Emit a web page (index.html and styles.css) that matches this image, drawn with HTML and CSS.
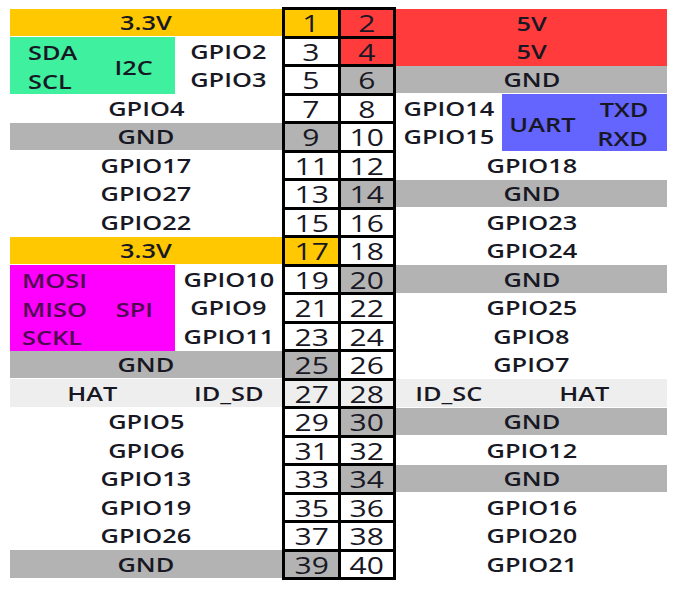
FILE: index.html
```html
<!DOCTYPE html>
<html>
<head>
<meta charset="utf-8">
<link rel="stylesheet" href="styles.css">
</head>
<body>
<div class="board">
  <div class="side left">
    <div class="cell full yellow"><span class="t">3.3V</span></div>
    <div class="group green span2">
      <div class="names"><span class="t l">SDA</span><span class="t l">SCL</span></div>
      <div class="proto"><span class="t">I2C</span></div>
    </div>
    <div class="cell"><span class="t">GPIO2</span></div>
    <div class="cell"><span class="t">GPIO3</span></div>
    <div class="cell full"><span class="t">GPIO4</span></div>
    <div class="cell full grey"><span class="t">GND</span></div>
    <div class="cell full"><span class="t">GPIO17</span></div>
    <div class="cell full"><span class="t">GPIO27</span></div>
    <div class="cell full"><span class="t">GPIO22</span></div>
    <div class="cell full yellow"><span class="t">3.3V</span></div>
    <div class="group magenta span3">
      <div class="names spi"><span class="t l">MOSI</span><span class="t l">MISO</span><span class="t l">SCKL</span></div>
      <div class="proto"><span class="t">SPI</span></div>
    </div>
    <div class="cell"><span class="t">GPIO10</span></div>
    <div class="cell"><span class="t">GPIO9</span></div>
    <div class="cell"><span class="t">GPIO11</span></div>
    <div class="cell full grey"><span class="t">GND</span></div>
    <div class="cell light"><span class="t">HAT</span></div>
    <div class="cell light"><span class="t">ID_SD</span></div>
    <div class="cell full"><span class="t">GPIO5</span></div>
    <div class="cell full"><span class="t">GPIO6</span></div>
    <div class="cell full"><span class="t">GPIO13</span></div>
    <div class="cell full"><span class="t">GPIO19</span></div>
    <div class="cell full"><span class="t">GPIO26</span></div>
    <div class="cell full grey"><span class="t">GND</span></div>
  </div>

  <div class="pins">
    <div class="pin yellow"><span class="n">1</span></div><div class="pin red"><span class="n">2</span></div>
    <div class="pin"><span class="n">3</span></div><div class="pin red"><span class="n">4</span></div>
    <div class="pin"><span class="n">5</span></div><div class="pin grey"><span class="n">6</span></div>
    <div class="pin"><span class="n">7</span></div><div class="pin"><span class="n">8</span></div>
    <div class="pin grey"><span class="n">9</span></div><div class="pin"><span class="n">10</span></div>
    <div class="pin"><span class="n">11</span></div><div class="pin"><span class="n">12</span></div>
    <div class="pin"><span class="n">13</span></div><div class="pin grey"><span class="n">14</span></div>
    <div class="pin"><span class="n">15</span></div><div class="pin"><span class="n">16</span></div>
    <div class="pin yellow"><span class="n">17</span></div><div class="pin"><span class="n">18</span></div>
    <div class="pin"><span class="n">19</span></div><div class="pin grey"><span class="n">20</span></div>
    <div class="pin"><span class="n">21</span></div><div class="pin"><span class="n">22</span></div>
    <div class="pin"><span class="n">23</span></div><div class="pin"><span class="n">24</span></div>
    <div class="pin grey"><span class="n">25</span></div><div class="pin"><span class="n">26</span></div>
    <div class="pin light"><span class="n">27</span></div><div class="pin light"><span class="n">28</span></div>
    <div class="pin"><span class="n">29</span></div><div class="pin grey"><span class="n">30</span></div>
    <div class="pin"><span class="n">31</span></div><div class="pin"><span class="n">32</span></div>
    <div class="pin"><span class="n">33</span></div><div class="pin grey"><span class="n">34</span></div>
    <div class="pin"><span class="n">35</span></div><div class="pin"><span class="n">36</span></div>
    <div class="pin"><span class="n">37</span></div><div class="pin"><span class="n">38</span></div>
    <div class="pin grey"><span class="n">39</span></div><div class="pin"><span class="n">40</span></div>
  </div>

  <div class="side right">
    <div class="group red span2 full stack">
      <span class="t">5V</span><span class="t">5V</span>
    </div>
    <div class="cell full grey"><span class="t">GND</span></div>
    <div class="cell"><span class="t">GPIO14</span></div>
    <div class="group blue span2 uart">
      <div class="proto"><span class="t">UART</span></div>
      <div class="names rx"><span class="t r">TXD</span><span class="t r">RXD</span></div>
    </div>
    <div class="cell"><span class="t">GPIO15</span></div>
    <div class="cell full"><span class="t">GPIO18</span></div>
    <div class="cell full grey"><span class="t">GND</span></div>
    <div class="cell full"><span class="t">GPIO23</span></div>
    <div class="cell full"><span class="t">GPIO24</span></div>
    <div class="cell full grey"><span class="t">GND</span></div>
    <div class="cell full"><span class="t">GPIO25</span></div>
    <div class="cell full"><span class="t">GPIO8</span></div>
    <div class="cell full"><span class="t">GPIO7</span></div>
    <div class="cell light"><span class="t">ID_SC</span></div>
    <div class="cell light"><span class="t">HAT</span></div>
    <div class="cell full grey"><span class="t">GND</span></div>
    <div class="cell full"><span class="t">GPIO12</span></div>
    <div class="cell full grey"><span class="t">GND</span></div>
    <div class="cell full"><span class="t">GPIO16</span></div>
    <div class="cell full"><span class="t">GPIO20</span></div>
    <div class="cell full"><span class="t">GPIO21</span></div>
  </div>
</div>
</body>
</html>
```

FILE: styles.css
```css
html, body {
  margin: 0;
  padding: 0;
  background: #ffffff;
}

body {
  font-family: "Open Sans", "DejaVu Sans", sans-serif;
  color: #181824;
}

.board {
  display: flex;
  align-items: flex-start;
  padding: 7px 0 0 10px;
}

.side {
  display: grid;
  grid-template-rows: repeat(20, 27.5px);
  row-gap: 1px;
  margin-top: 1.5px;
}

.left {
  grid-template-columns: 165px 107px;
  width: 272px;
}

.right {
  grid-template-columns: 106px 165px;
  width: 271px;
}

.cell {
  display: flex;
  align-items: center;
  justify-content: center;
  padding-top: 2px;
  box-sizing: border-box;
}

.full {
  grid-column: 1 / -1;
}

.span2 {
  grid-row: span 2;
}

.span3 {
  grid-row: span 3;
}

.t {
  display: inline-block;
  font-size: 19.5px;
  font-weight: 600;
  line-height: 24px;
  transform: scaleX(1.3);
  white-space: nowrap;
}

.t.l {
  transform-origin: left center;
}

.t.r {
  transform-origin: right center;
}

.group {
  display: grid;
  grid-template-columns: 83px 82px;
  margin-bottom: -1px;
}

.names {
  display: flex;
  flex-direction: column;
  justify-content: center;
  padding-left: 18px;
  padding-top: 2px;
}

.names.spi {
  padding-left: 12px;
}

.names .t {
  line-height: 28.5px;
}

.proto {
  display: flex;
  align-items: center;
  justify-content: center;
  padding-top: 2px;
}

.uart {
  grid-template-columns: 80px 85px;
}

.names.rx {
  padding-left: 0;
  padding-right: 19px;
  align-items: flex-end;
}

.stack {
  display: flex;
  flex-direction: column;
  align-items: center;
  justify-content: center;
  padding-top: 1px;
}

.stack .t {
  line-height: 28px;
}

.pins {
  display: grid;
  grid-template-columns: 52.5px 52.5px;
  grid-template-rows: repeat(20, 25.5px);
  gap: 3px;
  padding: 3px;
  background: #000000;
  width: 114px;
  box-sizing: border-box;
}

.pin {
  background: #ffffff;
  display: flex;
  align-items: center;
  justify-content: center;
  padding-top: 1px;
  box-sizing: border-box;
}

.n {
  display: inline-block;
  font-size: 24px;
  font-weight: 500;
  line-height: 24px;
  transform: scaleX(1.25);
}

.yellow { background: #ffc800; }
.red { background: #ff3b3b; }
.grey { background: #b3b3b3; }
.light { background: #eeeeee; }
.green { background: #3ff09e; }
.magenta { background: #ff00ff; color: #4e0a50; }
.blue { background: #6464ff; }
```
